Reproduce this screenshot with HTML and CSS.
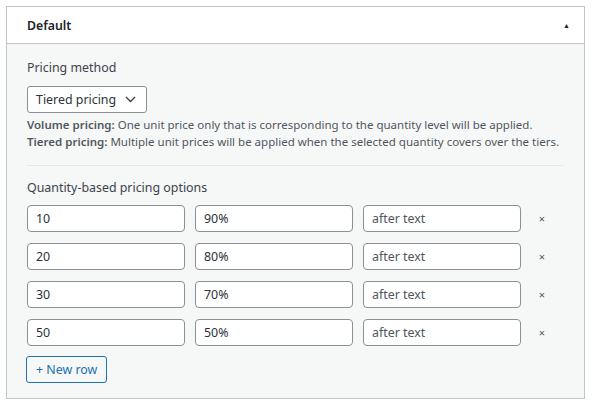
FILE: index.html
```html
<!DOCTYPE html>
<html>
<head>
<meta charset="utf-8">
<link rel="stylesheet" href="styles.css">
</head>
<body>
<div class="panel">
  <div class="panel-head">
    <span class="panel-title">Default</span>
    <span class="toggle">&#9650;</span>
  </div>
  <div class="panel-body">
    <div class="field-label">Pricing method</div>
    <div class="select">
      <span>Tiered pricing</span>
      <svg class="chev" width="11" height="7" viewBox="0 0 11 7"><path d="M1 1l4.5 4.5L10 1" fill="none" stroke="#3c434a" stroke-width="1.4"/></svg>
    </div>
    <div class="desc">
      <div><b>Volume pricing:</b> One unit price only that is corresponding to the quantity level will be applied.</div>
      <div><b>Tiered pricing:</b> Multiple unit prices will be applied when the selected quantity covers over the tiers.</div>
    </div>
    <hr class="sep">
    <div class="field-label second">Quantity-based pricing options</div>
    <div class="rows">
      <div class="row"><div class="input">10</div><div class="input">90%</div><div class="input muted">after text</div><div class="remove">&times;</div></div>
      <div class="row"><div class="input">20</div><div class="input">80%</div><div class="input muted">after text</div><div class="remove">&times;</div></div>
      <div class="row"><div class="input">30</div><div class="input">70%</div><div class="input muted">after text</div><div class="remove">&times;</div></div>
      <div class="row"><div class="input">50</div><div class="input">50%</div><div class="input muted">after text</div><div class="remove">&times;</div></div>
    </div>
    <div class="btn">+ New row</div>
  </div>
</div>
</body>
</html>
```
FILE: styles.css
```css
html, body {
  margin: 0;
  padding: 0;
  background: #ffffff;
}
body {
  font-family: "Noto Sans", "Open Sans", sans-serif;
  font-size: 12.4px;
  color: #3c434a;
  padding: 6px 0 0 6px;
}
.panel {
  width: 579px;
  border: 1px solid #c3c4c7;
  background: #f6f7f7;
  box-sizing: border-box;
}
.panel-head {
  height: 37px;
  background: #fff;
  border-bottom: 1px solid #c3c4c7;
  box-sizing: border-box;
  display: flex;
  align-items: center;
  justify-content: space-between;
  padding: 0 14px 0 20px;
}
.panel-title {
  font-weight: 600;
  color: #1d2327;
  font-size: 12.3px;
}
.toggle {
  font-size: 7px;
  color: #1d2327;
  line-height: 1;
}
.panel-body {
  padding: 15px 20px 15px 20px;
}
.field-label {
  line-height: 18px;
  height: 18px;
  margin-bottom: 9px;
  color: #3c434a;
}
.select {
  width: 120px;
  height: 27px;
  box-sizing: border-box;
  border: 1px solid #8c8f94;
  border-radius: 3px;
  background: #fff;
  display: flex;
  align-items: center;
  justify-content: space-between;
  padding: 0 10px 0 8px;
  color: #2c3338;
}
.chev { display: block; }
.desc {
  margin-top: 3px;
  font-size: 11.5px;
  line-height: 17px;
  color: #50575e;
  white-space: nowrap;
}
.desc b { font-weight: 600; }
.sep {
  border: 0;
  border-top: 1px solid #e8e8e8;
  margin: 15px 0 13px 0;
  height: 0;
}
.field-label.second { margin-bottom: 8px; }
.rows {
  display: flex;
  flex-direction: column;
  gap: 11px;
}
.row {
  display: grid;
  grid-template-columns: 158px 158px 158px 22px;
  column-gap: 10px;
  align-items: center;
}
.input {
  height: 27px;
  box-sizing: border-box;
  border: 1px solid #8c8f94;
  border-radius: 4px;
  background: #fff;
  padding: 0 8px;
  line-height: 25px;
  color: #2c3338;
}
.input.muted { color: #50575e; }
.remove {
  text-align: center;
  font-size: 11px;
  color: #50575e;
}
.btn {
  display: inline-block;
  margin-top: 10px;
  margin-left: -1px;
  height: 27px;
  line-height: 25px;
  box-sizing: border-box;
  padding: 0 9px;
  border: 1px solid #2271b1;
  border-radius: 3px;
  color: #2271b1;
  background: #f6f7f7;
}
```
